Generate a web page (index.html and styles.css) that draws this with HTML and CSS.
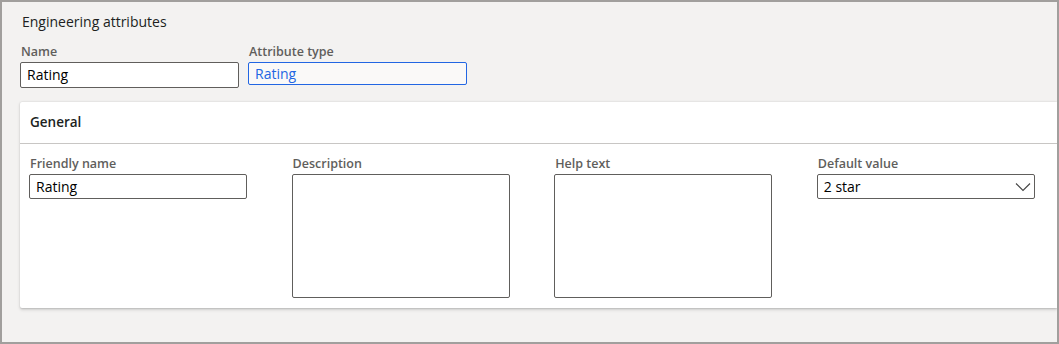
FILE: index.html
```html
<!DOCTYPE html>
<html lang="en">
  <head>
    <meta charset="UTF-8" />
    <meta name="viewport" content="width=device-width, initial-scale=1.0" />
    <link rel="stylesheet" href="styles.css">
    <title>Engineering attributes</title>
  </head>
  <body>
    <div class="frame">
      <div class="page-title">Engineering attributes</div>

      <div class="top-fields">
        <div class="field name-field">
          <label class="label">Name</label>
          <div class="input">Rating</div>
        </div>
        <div class="field type-field">
          <label class="label">Attribute type</label>
          <div class="input readonly">Rating</div>
        </div>
      </div>

      <div class="card">
        <div class="card-header">General</div>
        <div class="card-body">
          <div class="field">
            <label class="label">Friendly name</label>
            <div class="input">Rating</div>
          </div>
          <div class="field">
            <label class="label">Description</label>
            <div class="input textarea"></div>
          </div>
          <div class="field">
            <label class="label">Help text</label>
            <div class="input textarea"></div>
          </div>
          <div class="field">
            <label class="label">Default value</label>
            <div class="input select">
              <span>2 star</span>
              <!-- chevron -->
              <svg class="chevron" width="16" height="10" viewBox="0 0 16 10">
                <path d="M1 1.5 L8 8.5 L15 1.5" fill="none" stroke="#444" stroke-width="1.1"/>
              </svg>
            </div>
          </div>
        </div>
      </div>
    </div>
  </body>
</html>
```

FILE: styles.css
```css
* {
    box-sizing: border-box;
}
body {
    margin: 0;
    font-family: "Segoe UI", "Open Sans", sans-serif;
    color: #201f1e;
}
.frame {
    width: 1059px;
    height: 344px;
    border: 2px solid #a19f9d;
    background-color: #f3f2f1;
    overflow: hidden; /* card runs under the right edge */
    padding: 10px 0 0 18px;
}
.page-title {
    font-size: 14px;
    line-height: 20px;
    padding-left: 2px;
}
.top-fields {
    display: flex;
    gap: 9px;
    margin-top: 12px;
}
.field {
    display: flex;
    flex-direction: column;
}
.label {
    font-size: 12.5px;
    font-weight: 600;
    color: #605e5c;
    line-height: 16px;
    padding-left: 1px;
    margin-bottom: 2px;
}
.input {
    width: 219px;
    height: 26px;
    border: 1px solid #605e5c;
    border-radius: 2px;
    background: #fff;
    font-size: 14px;
    line-height: 24px;
    padding: 0 6px;
    color: #000;
}
.type-field .input {
    height: 23px;
    line-height: 21px;
}
.input.readonly {
    border-color: #2266e3;
    background: #faf9f8;
    color: #2266e3;
}

/* General card */
.card {
    margin-top: 14px;
    background: #fff;
    box-shadow: 0 0.6px 1.8px rgba(0, 0, 0, 0.14), 0 1.6px 3.6px rgba(0, 0, 0, 0.12);
    border-radius: 2px 0 0 2px;
    height: 206px;
}
.card-header {
    height: 42px;
    line-height: 40px;
    padding-left: 10px;
    font-size: 13.5px;
    font-weight: 600;
    border-bottom: 1px solid #c8c6c4;
}
.card-body {
    display: grid;
    grid-template-columns: repeat(4, 218px);
    column-gap: 44.6px;
    padding: 12px 0 0 9px;
}
.card-body .input {
    width: 218px;
    height: 25px;
    line-height: 23px;
}
.card-body .input.textarea {
    height: 124px;
}
.input.select {
    display: flex;
    align-items: center;
    justify-content: space-between;
    padding-right: 3px;
}
.chevron {
    display: block;
}
```
